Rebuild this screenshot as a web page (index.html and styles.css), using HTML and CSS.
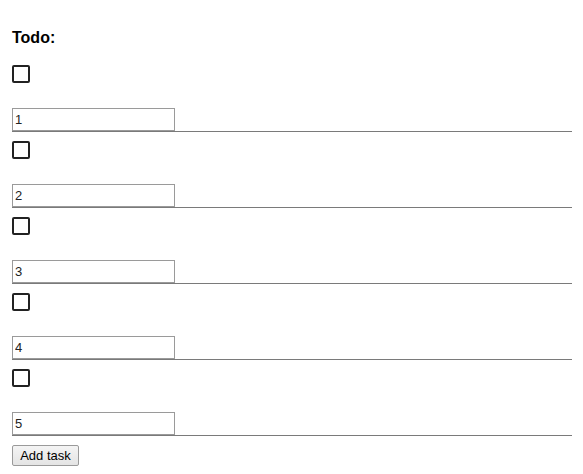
FILE: index.html
```html
<!DOCTYPE html>
<html>
<head>
<meta charset="utf-8">
<link rel="stylesheet" href="styles.css">
</head>
<body>
<div class="todo">
  <div class="title">Todo:</div>
  <div class="item"><input type="checkbox" class="check"><input type="text" class="field" value="1"></div>
  <div class="item"><input type="checkbox" class="check"><input type="text" class="field" value="2"></div>
  <div class="item"><input type="checkbox" class="check"><input type="text" class="field" value="3"></div>
  <div class="item"><input type="checkbox" class="check"><input type="text" class="field" value="4"></div>
  <div class="item"><input type="checkbox" class="check"><input type="text" class="field" value="5"></div>
  <button class="add">Add task</button>
</div>
</body>
</html>
```
FILE: styles.css
```css
html, body {
  margin: 0;
  background: #fff;
}
body {
  padding: 29px 11px 0 12px;
  font-family: "Liberation Sans", Arial, sans-serif;
  color: #000;
}
.todo {
  display: flex;
  flex-direction: column;
  align-items: stretch;
}
.title {
  font-size: 16px;
  font-weight: bold;
  line-height: 18px;
  height: 18px;
  margin-bottom: 9px;
}
.item {
  display: flex;
  flex-direction: column;
  align-items: flex-start;
  padding-top: 9px;
  border-bottom: 1px solid #7a7a7a;
}
.check {
  appearance: none;
  -webkit-appearance: none;
  margin: 0 0 25px 0;
  width: 18px;
  height: 18px;
  border: 2px solid #222;
  border-radius: 2px;
  background: #fff;
  box-sizing: border-box;
}
.field {
  box-sizing: border-box;
  margin: 0;
  width: 163px;
  height: 23px;
  border: 1px solid #9a9a9a;
  padding: 1px 2px;
  font-family: "Liberation Sans", Arial, sans-serif;
  font-size: 13px;
  color: #222;
  background: #fff;
  outline: none;
}
.add {
  align-self: flex-start;
  margin-top: 9px;
  box-sizing: border-box;
  width: 67px;
  height: 21px;
  padding: 0;
  border: 1px solid #9a9a9a;
  border-radius: 2px;
  background: linear-gradient(#f4f4f4, #e4e4e4);
  font-family: "Liberation Sans", Arial, sans-serif;
  font-size: 13px;
  color: #000;
}
```
